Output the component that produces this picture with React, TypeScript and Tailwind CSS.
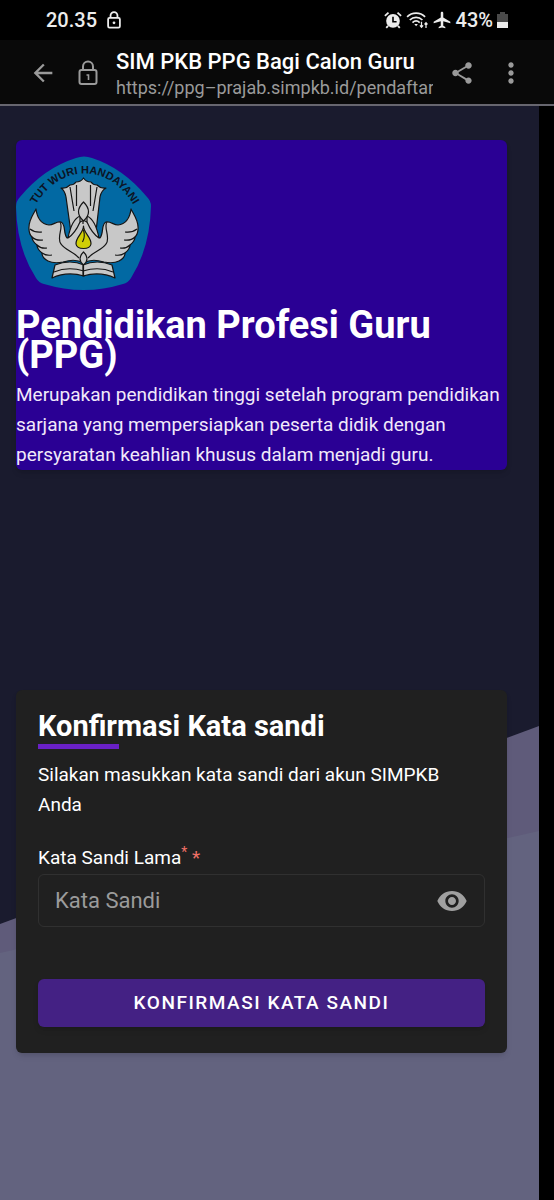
import { MdAirplanemodeActive, MdArrowBack, MdMoreVert, MdShare, MdVisibility } from "react-icons/md";

// Small padlock used by the status bar and the address bar
const Padlock = ({className, thick}: {className: string; thick?: boolean}) => {
  return (
    <svg viewBox="0 0 20 26" className={className} fill="none" stroke="currentColor" strokeWidth={thick ? 2.6 : 2}>
      <rect x="1.5" y="10" width="17" height="14" rx="2" />
      <path d="M5 10V6.5a5 5 0 0 1 10 0V10" />
      {thick ? (
        <circle cx="10" cy="17" r="2" fill="currentColor" stroke="none" />
      ) : (
        <path d="M8.5 15h2v5" strokeWidth="1.6" />
      )}
    </svg>
  );
};

// Status Bar
const StatusBar = () => {
  return (
    <div className="flex h-10 items-center justify-between bg-black px-[46px] text-[#ececec]">
      <div className="flex items-center gap-2.5">
        <span className="text-xl font-medium">20.35</span>
        <Padlock thick className="h-[18px] w-3.5" />
      </div>
      <div className="flex items-center gap-1">
        {/* Alarm */}
        <svg viewBox="0 0 20 20" className="size-[18px]">
          <circle cx="10" cy="11" r="7.6" fill="currentColor" />
          <path d="M1 5.5 5 1.8M19 5.5l-4-3.7M4.5 16.5l-2 2.3M15.5 16.5l2 2.3" stroke="currentColor" strokeWidth="2" />
          <path d="M10 6.5V12h4" fill="none" stroke="#000" strokeWidth="1.8" />
        </svg>
        {/* Wifi */}
        <svg viewBox="0 0 24 20" className="h-[18px] w-[22px]" fill="none" stroke="currentColor" strokeWidth="1.9">
          <path d="M1 6.5c5.5-5.5 14.5-5.5 20 0M4 10c4-4 10-4 14 0M7 13c2.5-2.5 5.5-2.5 8 0" />
          <path d="m9 14.5 2 2.5 2-2.5z" fill="currentColor" stroke="none" />
          <path d="M17 12v6m-1.8-2 1.8 2 1.8-2M22 19v-6m-1.6 2 1.6-2 1.6 2" strokeWidth="1.4" />
        </svg>
        <MdAirplanemodeActive className="size-5" />
        <span className="text-xl font-medium">43%</span>
        {/* Battery */}
        <svg viewBox="0 0 11 18" className="h-[18px] w-[11px]">
          <path d="M3 1h5v2h3v14H0V3h3z" fill="#4a4a4a" />
          <path d="M0 11h11v6H0z" fill="currentColor" />
        </svg>
      </div>
    </div>
  );
};

// Browser Bar
const BrowserBar = () => {
  return (
    <header className="flex h-[66px] items-center border-b-2 border-[#67666f] bg-[#090909] pt-0.5 pl-[29px] pr-[27px] text-[#9a9a9a]">
      <button type="button" aria-label="Kembali" className="shrink-0">
        <MdArrowBack className="size-7" />
      </button>
      <Padlock className="ml-[21px] h-[26px] w-5 shrink-0" />
      <div className="ml-[18px] w-[317px] min-w-0 pt-0.5">
        <h1 className="truncate text-[22px] leading-7 font-medium text-white">SIM PKB PPG Bagi Calon Guru</h1>
        <p className="overflow-hidden text-lg leading-6 whitespace-nowrap">https://ppg–prajab.simpkb.id/pendaftar</p>
      </div>
      <button type="button" aria-label="Bagikan" className="ml-auto shrink-0">
        <MdShare className="size-[26px]" />
      </button>
      <button type="button" aria-label="Menu" className="ml-5 shrink-0">
        <MdMoreVert className="size-8" />
      </button>
    </header>
  );
};

// One side of the emblem, mirrored for the other
const EmblemHalf = () => {
  return (
    <>
      {/* Wing */}
      <path d="M20 53c1 8 5 15 13 16 5 0 7-4 12-3 5 2 2 11 6 16l2-1 9-14 6-3v43c-8-4-14-3-21-1-5 1-11 1-15-1q-6-3-6-8-5-4-5-8-5-4-5-8-3-3-3-8c-1-8 4-14 7-20z" />
      <path d="M16 81q4 4 11 3M21 89q4 4 10 3M26 97q4 3 10 2M14 73q5 4 12 3M44 66c4 5-4 16 1 22 4 6 13 8 18 14" fill="none" />
      {/* Book */}
      <path d="M68 109q-14-6-29 0l-3 13q15-7 32-2z" />
      <path d="M38 116q14-6 30-1" fill="none" />
    </>
  );
};

// Tut Wuri Handayani emblem
const Emblem = () => {
  return (
    <svg viewBox="0 0 135 135" className="size-[135px]" role="img" aria-label="Tut Wuri Handayani">
      <path
        d="M60 2q8-3 16 0 31 10 55 39 4 4 4 9-1 42-20 72-3 5-8 6-39 12-79 0-5-1-8-6Q1 93 0 51q0-6 4-10Q28 12 60 2z"
        fill="#0269a3"
      />
      <path id="motto" d="M18 52C30 30 48 18 68 17.5S108 30 119 52" fill="none" />
      <text fill="#0c1424" fontFamily="Liberation Sans, sans-serif" fontSize="11" fontWeight="bold" textAnchor="middle">
        <textPath href="#motto" startOffset="50%">TUT WURI HANDAYANI</textPath>
      </text>
      <g fill="#c8c8c8" stroke="#151515" strokeWidth="1.2" strokeLinejoin="round">
        {/* Fan */}
        <path d="M45 32q5 1 9-3 4 0 6-3 5 0 7.5-4 2.5 4 7.5 4 2 3 6 3 4 4 9 3-5 3-6 9l-5 43-11.5-8-11.5 8-6-43q-1-6-5-9z" />
        <path d="M54 31l4 24M60.5 29v21M74.5 29v21M81 31l-4 24" fill="none" />
        <EmblemHalf />
        <g transform="translate(135 0) scale(-1 1)">
          <EmblemHalf />
        </g>
        {/* Hide the seam between both halves */}
        <path d="M64 68h7v38h-7z" stroke="none" />
        {/* Petals */}
        <path d="M64 60c-7 3-10 12-12 22 6-4 9-9 12-16zM71 60c7 3 10 12 12 22-6-4-9-9-12-16z" />
        <path d="M67.5 46q-10 10 0 19 10-9 0-19z" />
        {/* Flame */}
        <path d="M67.5 70c0 7 8 11 7.5 18-1 6-14 6-15 0-.5-7 7.5-11 7.5-18z" fill="#d0ce05" />
        <path d="M67.5 74q2 7-1 12" fill="none" />
        <path d="M67.5 96q-7 7 0 13 7-6 0-13zM67.5 109v11" />
      </g>
    </svg>
  );
};

// Program Intro
const Intro = () => {
  return (
    <section className="overflow-hidden rounded-md bg-[#2a0094] pt-4 text-white shadow-md">
      <Emblem />
      <h2 className="mt-[19px] text-[38px] leading-[30px] font-bold">Pendidikan Profesi Guru (PPG)</h2>
      <p className="mt-2.5 text-[19px] leading-[30px] text-[#f1e9fa]">
        Merupakan pendidikan tinggi setelah program pendidikan sarjana yang mempersiapkan peserta didik dengan
        persyaratan keahlian khusus dalam menjadi guru.
      </p>
    </section>
  );
};

// Password Form
const PasswordForm = () => {
  return (
    <form
      className="mt-[220px] rounded-md bg-[#202020] px-[22px] pt-5 pb-[26px] text-white shadow-md"
      onSubmit={(e) => e.preventDefault()}
    >
      <h2 className="text-[29px] leading-8 font-bold">Konfirmasi Kata sandi</h2>
      <div className="mt-0.5 h-[5px] w-[81px] bg-[#6920c6]" />
      <p className="mt-[11px] text-[19px] leading-[30px]">
        Silakan masukkan kata sandi dari akun SIMPKB Anda
      </p>
      <label htmlFor="password" className="mt-6 block text-[19px] leading-[28px]">
        Kata Sandi Lama<sup className="text-sm leading-none text-[#f07067]">*</sup>{" "}
        <span className="text-[#f07067]">*</span>
      </label>
      {/* Password Field */}
      <div className="mt-0.5 flex h-[53px] items-center rounded-md border border-[#303030] px-4">
        <input
          id="password"
          type="password"
          placeholder="Kata Sandi"
          className="min-w-0 flex-1 bg-transparent text-[22px] outline-none placeholder:text-[#9b9b9b]"
        />
        <button type="button" aria-label="Tampilkan kata sandi" className="text-[#a0a0a0]">
          <MdVisibility className="size-8" />
        </button>
      </div>
      <button
        type="submit"
        className="mt-[52px] block h-12 w-full rounded-md bg-[#442184] text-[19px] font-medium tracking-[0.08em] shadow-md"
      >
        KONFIRMASI KATA SANDI
      </button>
    </form>
  );
};

const App = () => {
  return (
    <div className="flex min-h-screen flex-col bg-black font-['Roboto',sans-serif]">
      <StatusBar />
      <BrowserBar />
      <main className="relative mr-[15px] flex-1 bg-[#1a1b2e] pt-[34px] pr-8 pb-8 pl-4">
        {/* Slanted backdrop */}
        <svg
          viewBox="0 0 539 474"
          preserveAspectRatio="none"
          className="absolute bottom-0 left-0 h-[474px] w-full"
          aria-hidden="true"
        >
          <path d="M0 198 539 0v474H0z" fill="#5f5b7a" />
          <path d="M0 227 539 105v369H0z" fill="#63637f" />
        </svg>
        <div className="relative">
          <Intro />
          <PasswordForm />
        </div>
      </main>
    </div>
  );
};

export default App;
